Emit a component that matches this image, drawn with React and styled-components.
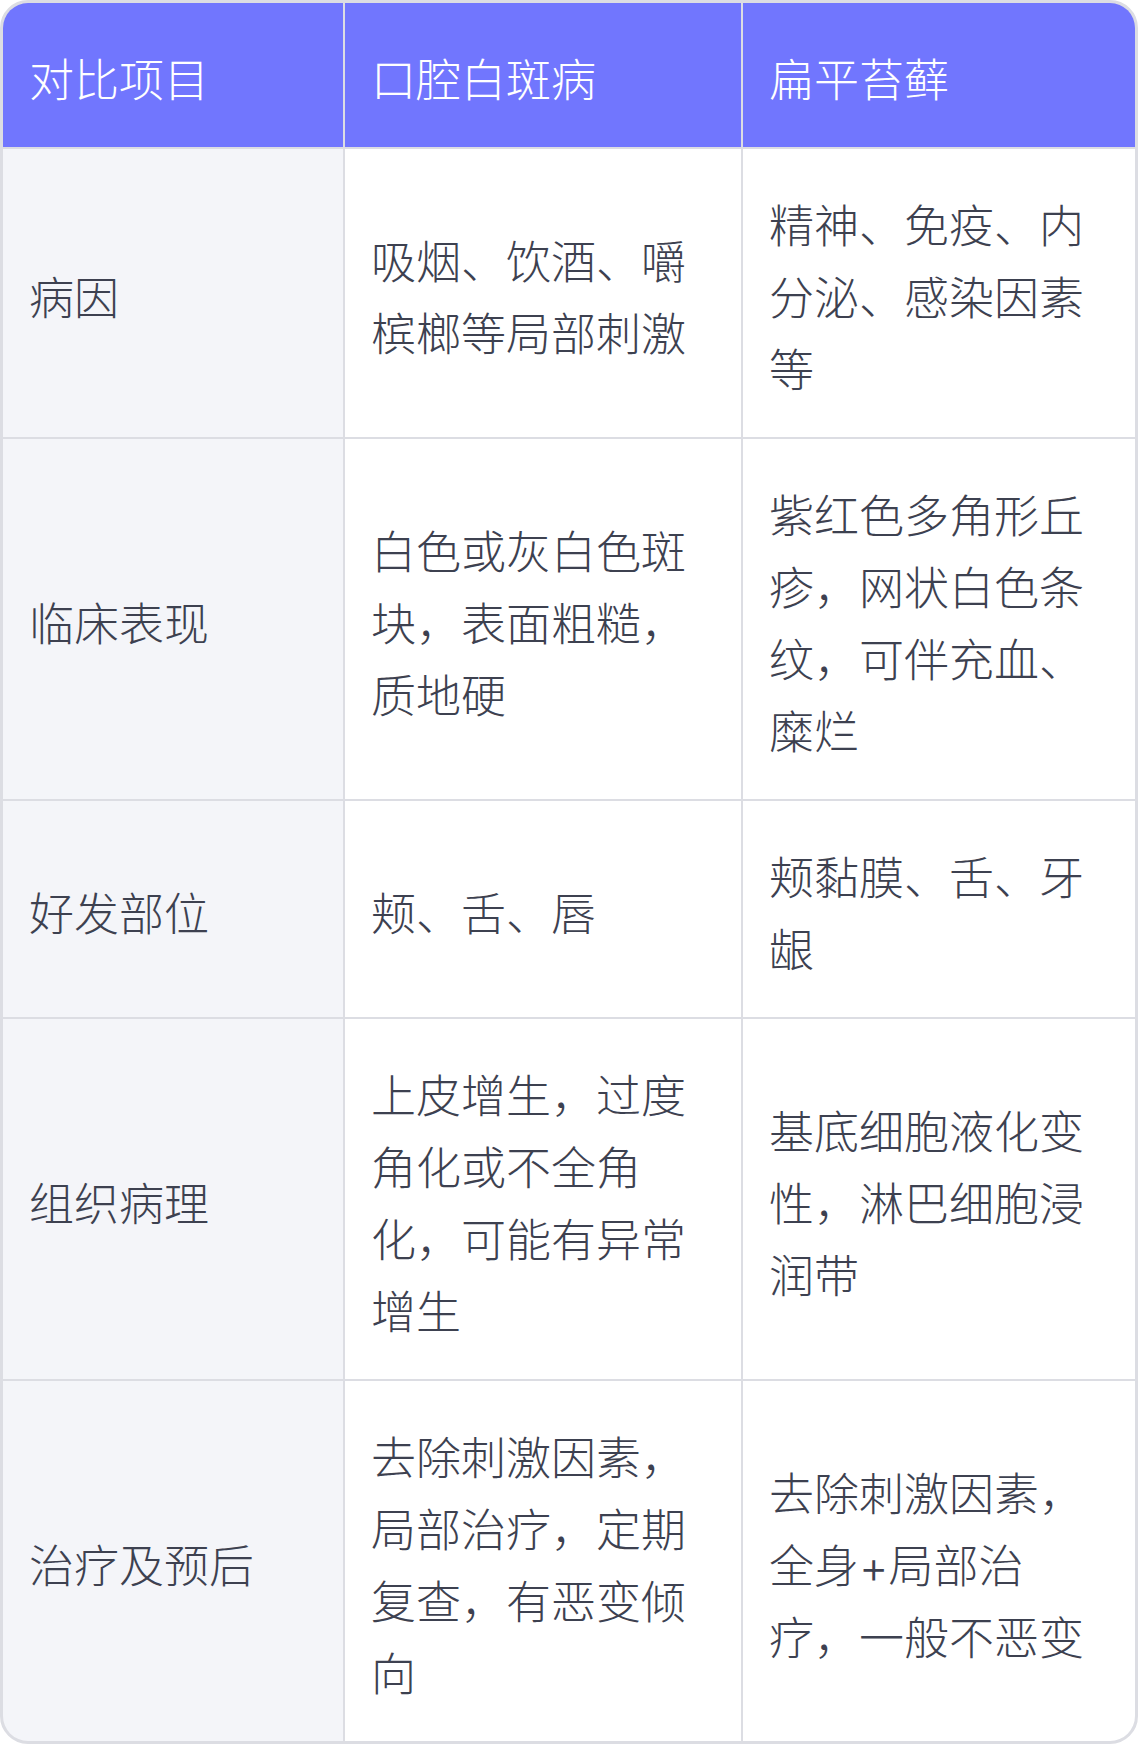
import React from 'react';
import styled, { createGlobalStyle } from 'styled-components';

const GlobalStyle = createGlobalStyle`
    html, body {
        margin: 0;
        padding: 0;
        background: #ffffff;
    }
    body {
        font-family: Inter, "Noto Sans CJK SC", sans-serif;
    }
`;

const Table = styled.div`
    display: grid;
    grid-template-columns: 340px 396px 392px;
    gap: 2px;
    width: 1132px;
    background: #dcdde3;
    border: 3px solid #dcdde3;
    border-radius: 28px;
    overflow: hidden;
`;

const Cell = styled.div`
    display: flex;
    align-items: center;
    padding: 42px 28px 30px 26px;
    font-size: 45px;
    line-height: 1.6;
    font-weight: 300;
    color: ${p => (p.$head ? '#ffffff' : '#3d4150')};
    background: ${p => (p.$head ? '#7176fe' : p.$label ? '#f4f5f9' : '#ffffff')};
`;

const headers = ['对比项目', '口腔白斑病', '扁平苔藓'];

const rows = [
    ['病因', '吸烟、饮酒、嚼槟榔等局部刺激', '精神、免疫、内分泌、感染因素等'],
    ['临床表现', '白色或灰白色斑块，表面粗糙，质地硬', '紫红色多角形丘疹，网状白色条纹，可伴充血、糜烂'],
    ['好发部位', '颊、舌、唇', '颊黏膜、舌、牙龈'],
    ['组织病理', '上皮增生，过度角化或不全角化，可能有异常增生', '基底细胞液化变性，淋巴细胞浸润带'],
    ['治疗及预后', '去除刺激因素，局部治疗，定期复查，有恶变倾向', '去除刺激因素，全身+局部治疗，一般不恶变']
];

const App = () => (
    <>
        <GlobalStyle />
        <Table>
            {headers.map(h => (
                <Cell key={h} $head>{h}</Cell>
            ))}
            {rows.map(row =>
                row.map((text, i) => (
                    <Cell key={row[0] + i} $label={i === 0}>{text}</Cell>
                ))
            )}
        </Table>
    </>
);

export default App;
